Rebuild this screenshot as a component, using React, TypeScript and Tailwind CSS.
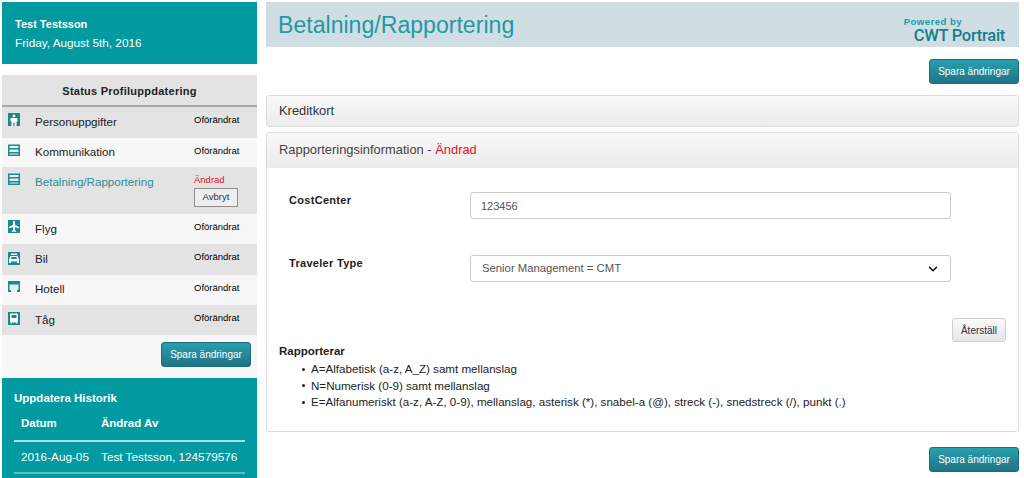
import React from 'react';
import { ChevronDown } from 'lucide-react';

type IconName = 'person' | 'card' | 'plane' | 'car' | 'bed' | 'train';

interface StatusRow {
  label: string;
  icon: IconName;
}

const StatusIcon = ({ name }: { name: IconName }) => (
  <svg width="12" height="13" viewBox="0 0 12 13" className="block">
    {name === 'card' && (
      <>
        <rect y="0.5" width="12" height="11.500" fill="#1b8a8c" />
        <path d="M1.500 2h9v2h-9ZM1.500 5.500h9v2.500h-9ZM1.500 9.500h9v1h-9Z" fill="#e4f2f2" />
      </>
    )}
    {name === 'bed' && (
      <>
        <rect width="12" height="11" fill="#1b8a8c" />
        <path d="M1.500 3.500h9v5.500h-9Z" fill="#e4f2f2" />
        <path d="M3 9h6v2H3Z" fill="#f7f7f7" />
      </>
    )}
    {name !== 'card' && name !== 'bed' && <rect width="12" height="13" fill="#1b8a8c" />}
    {name === 'person' && (
      <path d="M6 1.500a1.400 1.400 0 1 1 0 2.800 1.400 1.400 0 0 1 0-2.800ZM2.500 5h7v3.500H8.500V13H6.600V9.500H5.400V13H3.500V8.500h-1Z" fill="#fff" />
    )}
    {name === 'plane' && (
      <path d="M5.200 1h1.600l.4 4L11 7v1.300L7 7.200 6.800 10l1.400 1v1L6 11.400 3.800 12v-1l1.400-1L5 7.200 1 8.300V7l3.800-2Z" fill="#fff" />
    )}
    {name === 'car' && (
      <path d="M3 1.500h6v1.500H3ZM2.500 4h7L11 7.500V11H9V9.500H3V11H1V7.500ZM3.500 5 3 7h6l-.5-2Z" fill="#fff" fillRule="evenodd" />
    )}
    {name === 'train' && (
      <path d="M3 1.500h6a1 1 0 0 1 1 1V9a1 1 0 0 1-1 1l1 1.500H8.500L8 10.500H4l-.5 1H2L3 10a1 1 0 0 1-1-1V2.500a1 1 0 0 1 1-1ZM3.500 3v3h5V3Z" fill="#fff" fillRule="evenodd" />
    )}
  </svg>
);

const SaveButton = () => (
  <button className="w-[90px] h-[25px] rounded-[3px] border border-[#1b6f7c] bg-gradient-to-b from-[#2aa0ad] to-[#1e7485] text-[10px] text-white">
    Spara ändringar
  </button>
);

const Row = ({ label, icon, rowClass, iconClass, textClass }: StatusRow & { rowClass: string; iconClass: string; textClass: string }) => (
  <div className={`flex ${rowClass}`}>
    <div className={`w-[33px] pl-[6px] ${iconClass}`}>
      <StatusIcon name={icon} />
    </div>
    <div className={`w-[159px] text-[11.600px] leading-[18px] text-[#222] ${textClass}`}>{label}</div>
    <div className="pt-[6px] text-[9.500px] leading-[14px] text-black">Oförändrat</div>
  </div>
);

const Bullet = ({ children }: { children: React.ReactNode }) => (
  <li className="flex items-center">
    <span className="ml-[3px] mr-[6px] h-[3px] w-[3px] shrink-0 rounded-full bg-[#222]" />
    {children}
  </li>
);

export default function App() {
  return (
    <div className="flex h-[478px] w-[1024px] overflow-hidden bg-white font-['Liberation_Sans',Arial,sans-serif]">
      {/* Sidebar */}
      <aside className="ml-[2px] mt-[2px] w-[255px] shrink-0">
        <div className="h-[62px] bg-[#009aa0] pl-[13px] pt-[13px] text-white">
          <div className="text-[11px] leading-[18px] font-bold">Test Testsson</div>
          <div className="text-[11.750px] leading-[19px]">Friday, August 5th, 2016</div>
        </div>

        <div className="mt-[11px] h-[32px] border-b-2 border-[#a9a9a9] bg-[#e3e3e3] pt-[9px] text-center text-[11px] leading-[15px] font-bold tracking-[0.25px] text-[#222]">
          Status Profiluppdatering
        </div>
        <Row label="Personuppgifter" icon="person" rowClass="h-[31px] bg-[#e3e3e3]" iconClass="pt-[6px]" textClass="pt-[6px]" />
        <Row label="Kommunikation" icon="card" rowClass="h-[29px] bg-[#f7f7f7]" iconClass="pt-[6px]" textClass="pt-[5px]" />
        <div className="flex h-[47px] bg-[#e3e3e3]">
          <div className="w-[33px] pl-[6px] pt-[6px]">
            <StatusIcon name="card" />
          </div>
          <div className="w-[159px] pt-[6px] text-[11.600px] leading-[18px] text-[#2b8f97]">Betalning/Rapportering</div>
          <div className="pt-[6px]">
            <div className="text-[9.500px] leading-[13px] text-[#e8101c]">Ändrad</div>
            <button className="mt-[2px] block h-[19px] w-[44px] border border-[#8f8f8f] bg-[#eeeeee] text-[9.500px] text-[#333]">
              Avbryt
            </button>
          </div>
        </div>
        <Row label="Flyg" icon="plane" rowClass="h-[30px] bg-[#f7f7f7]" iconClass="pt-[6px]" textClass="pt-[6px]" />
        <Row label="Bil" icon="car" rowClass="h-[31px] bg-[#e3e3e3]" iconClass="pt-[8px]" textClass="pt-[6px]" />
        <Row label="Hotell" icon="bed" rowClass="h-[30px] bg-[#f7f7f7]" iconClass="pt-[6px]" textClass="pt-[5px]" />
        <Row label="Tåg" icon="train" rowClass="h-[30px] bg-[#e3e3e3]" iconClass="pt-[7px]" textClass="pt-[6px]" />
        <div className="flex h-[43px] justify-end bg-[#f7f7f7] pr-[6px] pt-[7px]">
          <SaveButton />
        </div>

        <div className="h-[100px] bg-[#009aa0] px-[12px] pt-[13px] text-white">
          <div className="text-[11.500px] leading-[14px] font-bold">Uppdatera Historik</div>
          <div className="mt-[11px] flex border-b-2 border-[#a8dfe0] pb-[10px] pl-[7px] text-[11.500px] leading-[14px] font-bold">
            <div className="w-[80px]">Datum</div>
            <div>Ändrad Av</div>
          </div>
          <div className="flex border-b-2 border-[#5fc0c3] py-[8px] pl-[7px] text-[11.750px] leading-[14px]">
            <div className="w-[80px]">2016-Aug-05</div>
            <div>Test Testsson, 124579576</div>
          </div>
        </div>
      </aside>

      {/* Main */}
      <main className="ml-[9px] mt-[2px] w-[753px] shrink-0">
        <div className="flex h-[45px] justify-between bg-[#d0dde2] pl-[12px]">
          <h1 className="pt-[8px] text-[23.100px] leading-[30px] text-[#1f9aa6]">Betalning/Rapportering</h1>
          <div className="pr-[14px] pt-[14px] text-right">
            <div className="pr-[43px] text-[9.500px] leading-[11px] font-bold text-[#12a0a8] tracking-[0.5px]">Powered by</div>
            <div className="font-['Roboto',sans-serif] text-[16.500px] leading-[18px] font-medium tracking-[-0.3px] text-[#14808c]">CWT Portrait</div>
          </div>
        </div>

        <div className="mt-[12px] flex justify-end">
          <SaveButton />
        </div>

        <div className="mt-[11px] h-[32px] rounded-[3px] border border-[#dddddd] bg-gradient-to-b from-[#f8f8f8] to-[#ececec] pl-[12px] pt-[6px] text-[12.900px] leading-[17px] text-[#333]">
          Kreditkort
        </div>

        <section className="mt-[5px] h-[300px] rounded-[3px] border border-[#dddddd]">
          <div className="h-[35px] bg-gradient-to-b from-[#f8f8f8] to-[#ececec] pl-[12px] pt-[8px] text-[12.900px] leading-[17px] text-[#444]">
            Rapporteringsinformation - <span className="text-[#e8101c]">Ändrad</span>
          </div>

          <div className="flex h-[87px] pl-[22px] pt-[24px]">
            <label className="w-[181px] pt-[1px] text-[11px] leading-[15px] font-bold tracking-[0.3px] text-[#222]">CostCenter</label>
            <div className="h-[27px] w-[481px] rounded-[3px] border border-[#cccccc] pl-[10px] pt-[6px] text-[11px] leading-[15px] text-[#555]">
              123456
            </div>
          </div>

          <div className="flex h-[63px] pl-[22px]">
            <label className="w-[181px] pt-[1px] text-[11px] leading-[15px] font-bold tracking-[0.3px] text-[#222]">Traveler Type</label>
            <div className="flex h-[27px] w-[481px] items-center justify-between rounded-[3px] border border-[#cccccc] pl-[11px] pr-[10px] text-[11.300px] text-[#555]">
              Senior Management = CMT
              <ChevronDown size={14} strokeWidth={2.5} className="text-black" />
            </div>
          </div>

          <div className="flex justify-end pr-[12px]">
            <button className="h-[24px] w-[54px] rounded-[3px] border border-[#cfcfcf] bg-gradient-to-b from-[#fafafa] to-[#e6e6e6] text-[10px] text-[#333]">
              Återställ
            </button>
          </div>

          <div className="pl-[12px] pt-[2px] text-[#222]">
            <div className="text-[11.500px] leading-[15px] font-bold">Rapporterar</div>
            <ul className="ml-[20px] mt-[2px] text-[11.600px] leading-[16.500px]">
              <Bullet>A=Alfabetisk (a-z, A_Z) samt mellanslag</Bullet>
              <Bullet>N=Numerisk (0-9) samt mellanslag</Bullet>
              <Bullet>E=Alfanumeriskt (a-z, A-Z, 0-9), mellanslag, asterisk (*), snabel-a (@), streck (-), snedstreck (/), punkt (.)</Bullet>
            </ul>
          </div>
        </section>

        <div className="mt-[15px] flex justify-end">
          <SaveButton />
        </div>
      </main>
    </div>
  );
}
